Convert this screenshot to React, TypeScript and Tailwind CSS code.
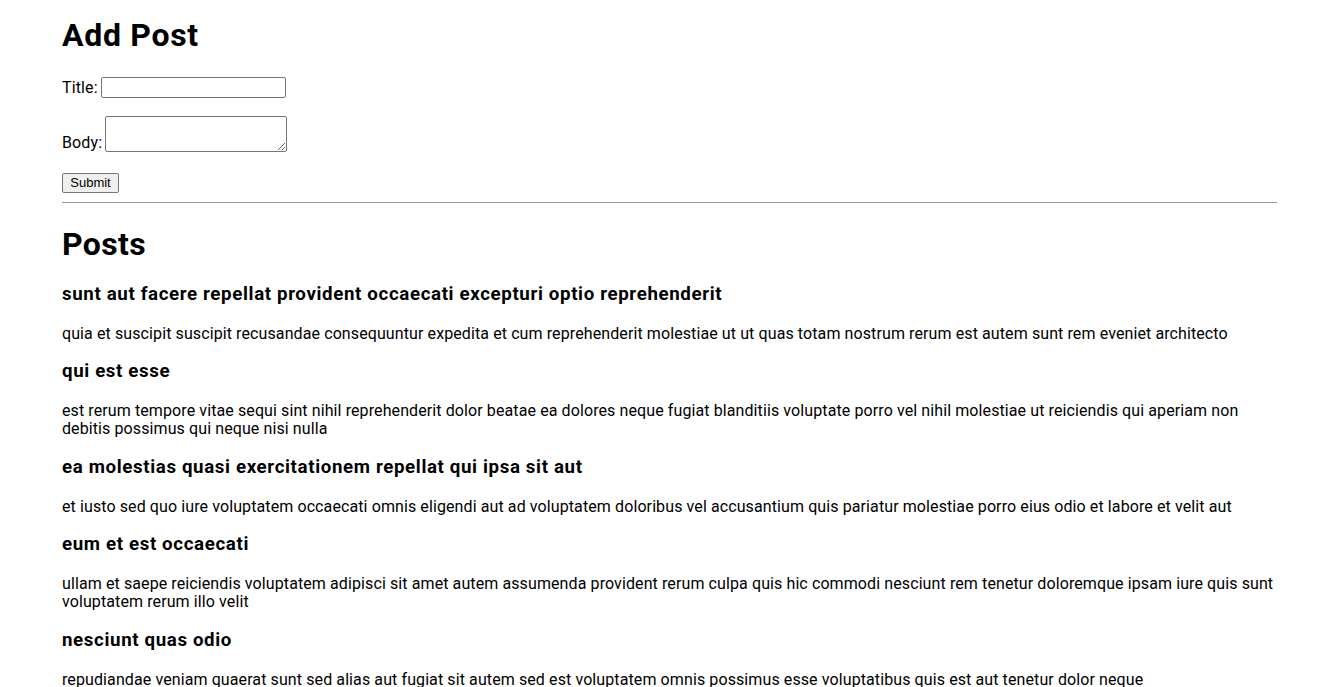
const posts = [
  {
    id: 1,
    title: 'sunt aut facere repellat provident occaecati excepturi optio reprehenderit',
    body: 'quia et suscipit suscipit recusandae consequuntur expedita et cum reprehenderit molestiae ut ut quas totam nostrum rerum est autem sunt rem eveniet architecto',
  },
  {
    id: 2,
    title: 'qui est esse',
    body: 'est rerum tempore vitae sequi sint nihil reprehenderit dolor beatae ea dolores neque fugiat blanditiis voluptate porro vel nihil molestiae ut reiciendis qui aperiam non debitis possimus qui neque nisi nulla',
  },
  {
    id: 3,
    title: 'ea molestias quasi exercitationem repellat qui ipsa sit aut',
    body: 'et iusto sed quo iure voluptatem occaecati omnis eligendi aut ad voluptatem doloribus vel accusantium quis pariatur molestiae porro eius odio et labore et velit aut',
  },
  {
    id: 4,
    title: 'eum et est occaecati',
    body: 'ullam et saepe reiciendis voluptatem adipisci sit amet autem assumenda provident rerum culpa quis hic commodi nesciunt rem tenetur doloremque ipsam iure quis sunt voluptatem rerum illo velit',
  },
  {
    id: 5,
    title: 'nesciunt quas odio',
    body: 'repudiandae veniam quaerat sunt sed alias aut fugiat sit autem sed est voluptatem omnis possimus esse voluptatibus quis est aut tenetur dolor neque',
  },
];

export default function App() {
  return (
    <div className="min-h-screen bg-white text-black font-['Roboto',sans-serif] leading-[1.15]">
      <div className="ml-[62px] mr-[57px] pt-[17px]">
        <h1 className="text-[32px] font-bold leading-[37px] tracking-[0.7px]">Add Post</h1>

        <form className="mt-[23px]" onSubmit={(e) => e.preventDefault()}>
          <div className="flex items-end text-[16px] tracking-[0.14px]">
            <label htmlFor="title" className="mb-[1px]">Title:</label>
            <input
              id="title"
              type="text"
              className="ml-[3px] w-[185px] h-[21px] border border-[#767676] rounded-[2px] bg-white px-[2px] text-[13px]"
            />
          </div>

          <div className="mt-[18px] flex items-end text-[16px] tracking-[0.14px]">
            <label htmlFor="body" className="leading-[18px]">Body:</label>
            <textarea
              id="body"
              className="ml-[3px] w-[182px] h-[36px] border border-[#767676] rounded-[2px] bg-white px-[2px] text-[13px]"
            />
          </div>

          <button
            type="submit"
            className="mt-[21px] block w-[57px] h-[20px] border border-[#767676] rounded-[2px] bg-[#efefef] text-[13px] leading-[16px] font-['Liberation_Sans',sans-serif]"
          >
            Submit
          </button>
        </form>

        <hr className="mt-[9px] border-0 border-t border-[#9a9a9a]" />

        <h2 className="mt-[23px] text-[32px] font-bold leading-[37px] tracking-[0.4px]">Posts</h2>

        <div className="mt-[21px]">
          {posts.map((post) => (
            <div key={post.id}>
              <h3 className="text-[18.72px] font-bold leading-[21.5px] tracking-[0.63px]">{post.title}</h3>
              <p className="mt-[19.3px] mb-[18.4px] text-[16px] leading-[18.2px] tracking-[0.1px]">{post.body}</p>
            </div>
          ))}
        </div>
      </div>
    </div>
  );
}
